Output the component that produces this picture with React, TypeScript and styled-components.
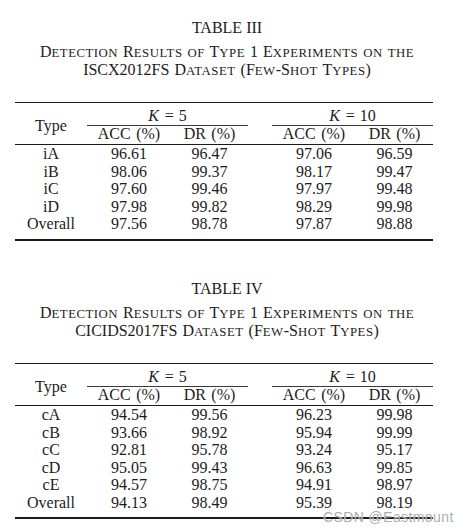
import * as React from "react";
import styled, { createGlobalStyle } from "styled-components";

// // // //

const GlobalStyle = createGlobalStyle`
    html, body {
        margin: 0;
        padding: 0;
        background: #ffffff;
    }
`;

const Page = styled.div`
    position: relative;
    width: 469px;
    height: 531px;
    box-sizing: border-box;
    padding: 18.6px 30px 0 15px;
    font-family: "Liberation Serif", "Times New Roman", serif;
    color: #1c1c1c;
    overflow: hidden;
`;

const Block = styled.section`
    & + & {
        margin-top: 39px;
    }
`;

const Title = styled.div`
    text-align: center;
    font-size: 16px;
    line-height: 18px;
`;

const Caption = styled.div`
    margin-top: 7.8px;
    text-align: center;
    font-size: 16px;
    line-height: 16.5px;
    word-spacing: 1px;
`;

const Small = styled.span`
    font-size: 0.8em;
    letter-spacing: 0.5px;
`;

const Grid = styled.div`
    margin-top: 22.6px;
    display: grid;
    grid-template-columns: 72px 84px 77px 24px 84px 77px;
    width: 418px;
    font-size: 16px;
    line-height: 15.5px;
`;

const Rule = styled.div<{ $weight: number; $gap?: number }>`
    grid-column: 1 / -1;
    height: ${(p) => p.$weight}px;
    margin-top: ${(p) => p.$gap || 0}px;
    background: #1a1a1a;
`;

const TypeHead = styled.div`
    grid-column: 1;
    grid-row: 2 / span 2;
    align-self: center;
    text-align: center;
    padding-top: 3px;
`;

const GroupHead = styled.div<{ $col: number }>`
    grid-column: ${(p) => p.$col} / span 2;
    grid-row: 2;
    text-align: center;
    padding: 4.5px 0 2px;
    border-bottom: 1px solid #3a3a3a;
    word-spacing: 1px;
`;

const Var = styled.i`
    font-style: italic;
    margin-right: 1px;
`;

const SubHead = styled.div<{ $col: number }>`
    grid-column: ${(p) => p.$col};
    grid-row: 3;
    text-align: center;
    padding-bottom: 2.5px;
    word-spacing: 1.5px;
`;

const Cell = styled.div<{ $col: number }>`
    grid-column: ${(p) => p.$col};
    text-align: center;
    white-space: nowrap;
    line-height: 17.5px;
`;

const Watermark = styled.div`
    position: absolute;
    left: 323px;
    top: 511px;
    font-family: "Liberation Sans", Arial, sans-serif;
    font-size: 14px;
    line-height: 12px;
    letter-spacing: 0.4px;
    color: rgba(150, 150, 150, 0.8);
    text-shadow: 0 0 1px rgba(255, 255, 255, 0.9);
`;

/**
 * SmallCaps
 * lowercase letters are shown as smaller capitals, like \scshape
 */
function SmallCaps(props: { text: string }) {
    const parts: { small: boolean; s: string }[] = [];
    for (const ch of props.text) {
        const small = /[a-z]/.test(ch);
        const last = parts[parts.length - 1];
        if (last && last.small === small) {
            last.s += small ? ch.toUpperCase() : ch;
        } else {
            parts.push({ small, s: small ? ch.toUpperCase() : ch });
        }
    }
    return (
        <>
            {parts.map((p, i) =>
                p.small ? <Small key={i}>{p.s}</Small> : <span key={i}>{p.s}</span>,
            )}
        </>
    );
}

type Result = [string, string, string, string, string];

const COLS = [1, 2, 3, 5, 6];

function ResultTable(props: {
    title: string;
    dataset: string;
    rows: Result[];
}) {
    return (
        <Block>
            <Title>{props.title}</Title>
            <Caption>
                <SmallCaps text="Detection Results of Type 1 Experiments on the" />
                <br />
                <SmallCaps text={`${props.dataset} Dataset (Few-Shot Types)`} />
            </Caption>
            <Grid>
                <Rule $weight={1.5} />
                <TypeHead>Type</TypeHead>
                <GroupHead $col={2}>
                    <Var>K</Var> = 5
                </GroupHead>
                <GroupHead $col={5}>
                    <Var>K</Var> = 10
                </GroupHead>
                <SubHead $col={2}>ACC (%)</SubHead>
                <SubHead $col={3}>DR (%)</SubHead>
                <SubHead $col={5}>ACC (%)</SubHead>
                <SubHead $col={6}>DR (%)</SubHead>
                <Rule $weight={1} />
                {props.rows.map((row) =>
                    row.map((v, i) => (
                        <Cell key={`${row[0]}-${i}`} $col={COLS[i]}>
                            {v}
                        </Cell>
                    )),
                )}
                <Rule $weight={2} $gap={5.6} />
            </Grid>
        </Block>
    );
}

const ISCX: Result[] = [
    ["iA", "96.61", "96.47", "97.06", "96.59"],
    ["iB", "98.06", "99.37", "98.17", "99.47"],
    ["iC", "97.60", "99.46", "97.97", "99.48"],
    ["iD", "97.98", "99.82", "98.29", "99.98"],
    ["Overall", "97.56", "98.78", "97.87", "98.88"],
];

const CICIDS: Result[] = [
    ["cA", "94.54", "99.56", "96.23", "99.98"],
    ["cB", "93.66", "98.92", "95.94", "99.99"],
    ["cC", "92.81", "95.78", "93.24", "95.17"],
    ["cD", "95.05", "99.43", "96.63", "99.85"],
    ["cE", "94.57", "98.75", "94.91", "98.97"],
    ["Overall", "94.13", "98.49", "95.39", "98.19"],
];

export default function App() {
    return (
        <Page>
            <GlobalStyle />
            <ResultTable title="TABLE III" dataset="ISCX2012FS" rows={ISCX} />
            <ResultTable title="TABLE IV" dataset="CICIDS2017FS" rows={CICIDS} />
            <Watermark>CSDN @Eastmount</Watermark>
        </Page>
    );
}
